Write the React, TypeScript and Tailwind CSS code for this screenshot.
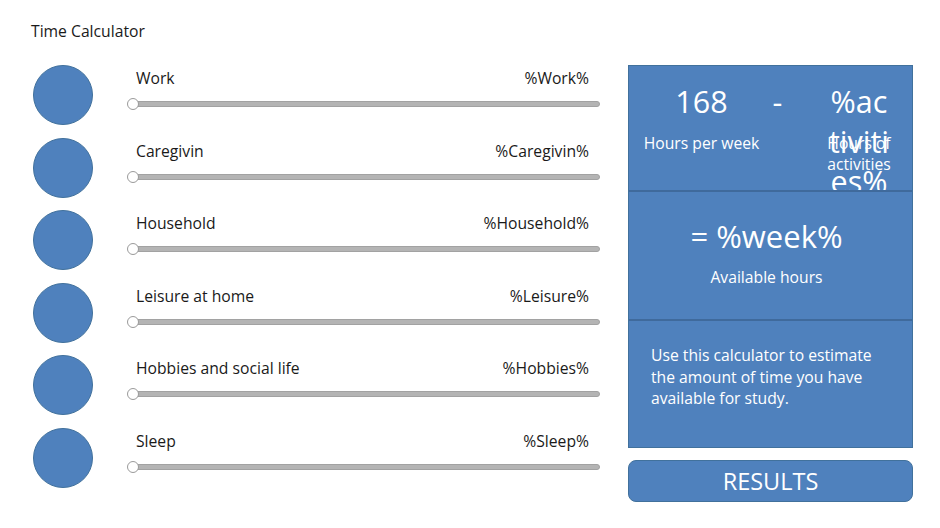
import React from 'react';

const activities = [
  { label: 'Work', value: '%Work%' },
  { label: 'Caregivin', value: '%Caregivin%' },
  { label: 'Household', value: '%Household%' },
  { label: 'Leisure at home', value: '%Leisure%' },
  { label: 'Hobbies and social life', value: '%Hobbies%' },
  { label: 'Sleep', value: '%Sleep%' },
];

const Slider = () => (
  <div className="relative h-[12px] w-[473px] flex items-center">
    <div className="ml-[3px] h-[6px] flex-1 rounded-r-full bg-[#b4b4b4] border border-[#a2a2a2]" />
    <div className="absolute left-0 top-0 h-[12px] w-[12px] rounded-full bg-white border border-[#9a9a9a]" />
  </div>
);

const App = () => {
  return (
    <div
      className="w-[940px] h-[528px] bg-white text-[#1a1a1a] overflow-hidden"
      style={{ fontFamily: '"Open Sans", "Noto Sans", sans-serif' }}
    >
      <div className="pt-[21px] pl-[31px] text-[15.7px] leading-[20px]">Time Calculator</div>

      <div className="mt-[24px] flex">
        {/* activity rows */}
        <div className="w-[628px] flex flex-col">
          {activities.map((a) => (
            <div key={a.label} className="h-[72.5px] flex items-start">
              <div className="ml-[33px] h-[60px] w-[60px] rounded-full bg-[#4f81bd] border border-[#41719c]" />
              <div className="ml-[34px] flex flex-col">
                <div className="mt-[3px] flex justify-between pl-[9px] pr-[11px] text-[15.7px] leading-[20px]">
                  <span>{a.label}</span>
                  <span>{a.value}</span>
                </div>
                <div className="mt-[10px]">
                  <Slider />
                </div>
              </div>
            </div>
          ))}
        </div>

        {/* summary panel */}
        <div className="w-[285px] flex flex-col text-white">
          <div className="bg-[#4f81bd] border border-[#41719c] flex flex-col">
            <div className="h-[124px] overflow-hidden flex pl-[15px] pt-[15px]">
              <div className="w-[115px] flex flex-col items-center">
                <div className="text-[30.5px] leading-[40px]">168</div>
                <div className="mt-[12px] text-[15.7px] leading-[20px] whitespace-nowrap">Hours per week</div>
              </div>
              <div className="w-[37px] text-[30.5px] leading-[40px] text-center">-</div>
              <div className="relative w-[64px] ml-[31px] text-center">
                <div className="text-[30.5px] leading-[40px] break-all">%activities%</div>
                <div className="absolute left-[-5px] right-[-5px] top-[52px] text-[15.7px] leading-[21px]">
                  Hours of activities
                </div>
              </div>
            </div>
            <div className="h-[129px] border-t-2 border-[#3f6a9c] flex flex-col items-center pt-[24px] pr-[8px]">
              <div className="text-[31px] leading-[40px]">= %week%</div>
              <div className="mt-[11px] text-[15.7px] leading-[20px]">Available hours</div>
            </div>
            <div className="h-[128px] border-t-2 border-[#3f6a9c] pt-[24px] pl-[22px] pr-[36px] text-[15.7px] leading-[21.5px]">
              Use this calculator to estimate the amount of time you have available for study.
            </div>
          </div>
          <button className="mt-[12px] h-[42px] rounded-[8px] bg-[#4f81bd] border border-[#41719c] text-white text-[23.5px] leading-[30px]">
            RESULTS
          </button>
        </div>
      </div>
    </div>
  );
};

export default App;
